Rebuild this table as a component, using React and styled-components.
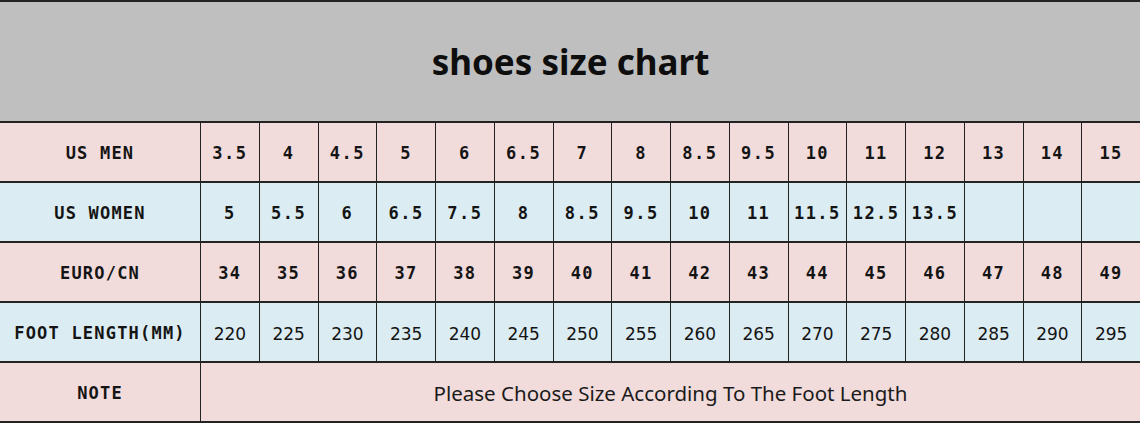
import styled, { createGlobalStyle } from "styled-components";

const GlobalStyle = createGlobalStyle`
    html, body {
        margin: 0;
        padding: 0;
        background: #fff;
        overflow: hidden;
    }
`;

const Chart = styled.div`
    display: grid;
    grid-template-columns: 200px repeat(16, 1fr);
    grid-template-rows: 119px repeat(5, 58px);
    column-gap: 1px;
    row-gap: 2px;
    width: 1140px;
    padding: 2px 0 2px;
    background: #232323;
`;

const Title = styled.div`
    grid-column: 1 / -1;
    display: flex;
    align-items: center;
    justify-content: center;
    background: #bfbfbf;
    color: #0e0e0e;
    font-family: "Noto Sans", "Open Sans", sans-serif;
    font-weight: 700;
    font-size: 35px;
    padding-left: 1px;
`;

const Cell = styled.div`
    display: flex;
    align-items: center;
    justify-content: center;
    background: ${({ $tone }) => ($tone === "blue" ? "#dbedf3" : "#f1dbdb")};
    color: #141414;
    font-family: ${({ $sans }) =>
        $sans ? '"DejaVu Sans", sans-serif' : '"DejaVu Sans Mono", monospace'};
    font-weight: ${({ $sans }) => ($sans ? 400 : 700)};
    font-size: 17px;
    letter-spacing: ${({ $sans }) => ($sans ? "0" : "1.5px")};
    padding-top: ${({ $sans }) => ($sans ? "3px" : "1px")};
    white-space: nowrap;
`;

const Label = styled(Cell)`
    font-family: "DejaVu Sans Mono", monospace;
    font-weight: 700;
    font-size: 17px;
    letter-spacing: 1.2px;
    padding-top: 2px;
`;

const Note = styled(Cell)`
    grid-column: 2 / -1;
    font-family: "Noto Sans", "Open Sans", sans-serif;
    font-weight: 400;
    font-size: 20.5px;
    letter-spacing: 0;
    color: #1a1a1a;
    padding-top: 1px;
`;

const rows = [
    { label: "US MEN", tone: "pink", values: ["3.5", "4", "4.5", "5", "6", "6.5", "7", "8", "8.5", "9.5", "10", "11", "12", "13", "14", "15"] },
    { label: "US WOMEN", tone: "blue", values: ["5", "5.5", "6", "6.5", "7.5", "8", "8.5", "9.5", "10", "11", "11.5", "12.5", "13.5", "", "", ""] },
    { label: "EURO/CN", tone: "pink", values: ["34", "35", "36", "37", "38", "39", "40", "41", "42", "43", "44", "45", "46", "47", "48", "49"] },
    { label: "FOOT LENGTH(MM)", tone: "blue", sans: true, values: ["220", "225", "230", "235", "240", "245", "250", "255", "260", "265", "270", "275", "280", "285", "290", "295"] },
];

const App = () => {
    return (
        <>
            <GlobalStyle />
            <Chart>
                <Title>shoes size chart</Title>
                {rows.map((row) => [
                    <Label key={row.label} $tone={row.tone}>{row.label}</Label>,
                    ...row.values.map((v, i) => (
                        <Cell key={row.label + i} $tone={row.tone} $sans={row.sans}>{v}</Cell>
                    )),
                ])}
                <Label $tone="pink">NOTE</Label>
                <Note $tone="pink">Please Choose Size According To The Foot Length</Note>
            </Chart>
        </>
    );
};

export default App;
